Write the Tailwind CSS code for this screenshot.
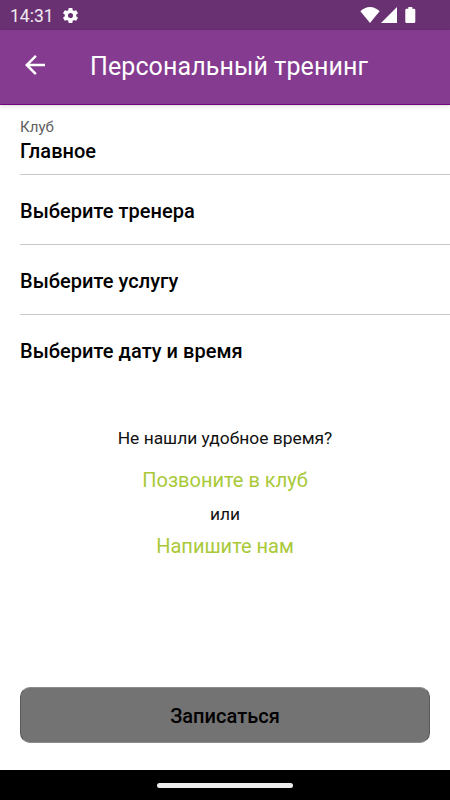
<!DOCTYPE html>
<html lang="ru">
<head>
    <meta charset="UTF-8">
    <meta name="viewport" content="width=device-width, initial-scale=1.0">
    <title>Персональный тренинг</title>
    <script src="https://cdn.jsdelivr.net/npm/@tailwindcss/browser@4"></script>
</head>
<body class="bg-white">
    <div class="flex flex-col w-[450px] h-[800px] overflow-hidden font-[Roboto,sans-serif] text-black">
        <!-- Status bar -->
        <div class="flex items-center h-[30px] shrink-0 pl-2.5 pr-[34px] bg-[#693072] text-white">
            <span class="text-[17.5px] leading-[30px] w-[51px] pt-px whitespace-nowrap text-white/90">14:31</span>
            <svg class="size-[19px]" viewBox="0 0 24 24" fill="currentColor">
                <path d="M19.14 12.94c.04-.3.06-.61.06-.94s-.02-.64-.07-.94l2.03-1.58a.49.49 0 0 0 .12-.61l-1.92-3.32a.49.49 0 0 0-.59-.22l-2.39.96c-.5-.38-1.03-.7-1.62-.94l-.36-2.54a.48.48 0 0 0-.48-.41h-3.84a.47.47 0 0 0-.47.41l-.36 2.54c-.59.24-1.13.57-1.62.94l-2.39-.96a.48.48 0 0 0-.59.22L2.74 8.87a.47.47 0 0 0 .12.61l2.03 1.58c-.05.3-.09.63-.09.94s.02.64.07.94l-2.03 1.58a.49.49 0 0 0-.12.61l1.92 3.32c.12.22.37.29.59.22l2.39-.96c.5.38 1.03.7 1.62.94l.36 2.54c.05.24.24.41.48.41h3.84c.24 0 .44-.17.47-.41l.36-2.54c.59-.24 1.13-.56 1.62-.94l2.39.96c.22.08.47 0 .59-.22l1.92-3.32a.47.47 0 0 0-.12-.61zM12 15.2a3.2 3.2 0 1 1 0-6.4 3.2 3.2 0 0 1 0 6.4z"/>
            </svg>
            <div class="flex items-center ml-auto">
                <svg class="w-5 h-4" viewBox="0 0 20 16" fill="currentColor">
                    <path d="M10 16 .4 4.2C3 1.8 6.300 0 10 0s7 1.800 9.600 4.200z"/>
                </svg>
                <svg class="w-4 h-4 ml-px" viewBox="0 0 16 16" fill="currentColor">
                    <path d="M0 16 16 0v16z"/>
                </svg>
                <svg class="w-[11px] h-4 ml-2" viewBox="0 0 11 16" fill="currentColor">
                    <path d="M3.300 0h4v1.700h1.700q1.300 0 1.300 1.300v11.700q0 1.300-1.300 1.300H1.600Q.3 16 .3 14.700V3q0-1.300 1.300-1.300h1.700z"/>
                </svg>
            </div>
        </div>

        <!-- App bar -->
        <header class="flex items-center h-[75px] shrink-0 pl-[20px] bg-[#853c90] border-b border-[#740580] text-white shadow-[0_1px_4px_rgba(0,0,0,0.16)]">
            <button class="w-[70px]" aria-label="Назад">
                <svg class="size-[30px] -mt-1" viewBox="0 0 24 24" fill="currentColor">
                    <path d="M20 11H7.830l5.590-5.590L12 4l-8 8 8 8 1.410-1.410L7.830 13H20v-2z"/>
                </svg>
            </button>
            <h1 class="text-[25px] leading-[30px] tracking-[0.1px] whitespace-nowrap">Персональный тренинг</h1>
        </header>

        <!-- Booking form -->
        <main class="flex flex-col grow">
            <div class="flex flex-col ml-5 text-xl font-medium tracking-[0.04px]">
                <div class="h-[70px] pt-3 border-b border-[#c8c8c8]">
                    <p class="text-[15px] leading-5 font-normal text-[#606060]">Клуб</p>
                    <p class="leading-[29px]">Главное</p>
                </div>
                <div class="flex items-center h-[70px] pt-[3px] border-b border-[#c8c8c8]">Выберите тренера</div>
                <div class="flex items-center h-[70px] pt-[3px] border-b border-[#c8c8c8]">Выберите услугу</div>
                <div class="flex items-center h-[70px] pt-[3px] border-b border-transparent">Выберите дату и время</div>
            </div>

            <div class="flex flex-col items-center mt-10 text-[17.4px] leading-[26px] text-[#111]">
                <p>Не нашли удобное время?</p>
                <a class="mt-3.5 text-xl leading-[30px] text-[#a9c938]">Позвоните в клуб</a>
                <p class="mt-1.5">или</p>
                <a class="mt-1 text-xl leading-[30px] text-[#a9c938]">Напишите нам</a>
            </div>

            <button class="mt-auto mx-5 mb-[27px] h-14 pt-px rounded-[10px] border border-x-[#595959] border-y-[#8c8c8c] bg-[#737373] text-xl font-medium tracking-[0.04px]">Записаться</button>
        </main>

        <!-- Navigation bar -->
        <div class="flex items-center justify-center h-[30px] shrink-0 bg-black">
            <div class="w-[136px] h-[5px] rounded-full bg-[#ececec]"></div>
        </div>
    </div>
</body>
</html>
